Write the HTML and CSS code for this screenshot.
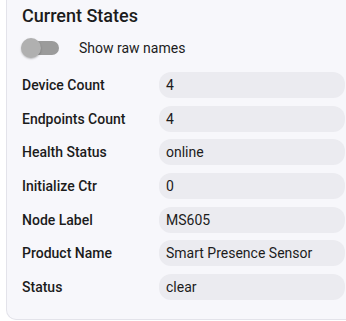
FILE: index.html
```html
<html>
<head>
  <link rel="stylesheet" href="styles.css">
</head>
<body>
<div class="card">
  <h2 class="title">Current States</h2>
  <div class="raw_toggle">
    <div class="switch">
      <div class="track"></div>
      <div class="thumb"></div>
    </div>
    <span>Show raw names</span>
  </div>
  <div class="states">
    <div class="label">Device Count</div>
    <div class="value">4</div>
    <div class="label">Endpoints Count</div>
    <div class="value">4</div>
    <div class="label">Health Status</div>
    <div class="value">online</div>
    <div class="label">Initialize Ctr</div>
    <div class="value">0</div>
    <div class="label">Node Label</div>
    <div class="value">MS605</div>
    <div class="label">Product Name</div>
    <div class="value">Smart Presence Sensor</div>
    <div class="label">Status</div>
    <div class="value">clear</div>
  </div>
</div>
</body>
</html>
```

FILE: styles.css
```css
body{
  margin: 0;
  background: #ffffff;
  font-family: Roboto, 'Noto Sans', sans-serif;
  color: #1c1c1c;
  overflow: hidden;
}
.card{
  margin-left: 6px;
  width: 340px;
  box-sizing: border-box;
  background: #f7f7fb;
  border-left: 1px solid #e3e3ea;
  border-bottom: 1px solid #e3e3ea;
  border-radius: 0 0 0 10px;
  padding: 4px 1px 19px 15px;
}
.title{
  margin: 0;
  font-size: 18px;
  line-height: 24px;
  font-weight: 500;
}
.raw_toggle{
  display: flex;
  align-items: center;
  gap: 20px;
  margin-top: 10px;
  height: 20px;
  font-size: 14px;
}
.switch{
  position: relative;
  width: 37px;
  height: 20px;
}
.track{
  position: absolute;
  left: 1px;
  top: 3px;
  width: 36px;
  height: 14px;
  border-radius: 7px;
  background: #9b9b9b;
}
.thumb{
  position: absolute;
  left: -1px;
  top: 0;
  width: 20px;
  height: 20px;
  border-radius: 50%;
  background: #b0b0b0;
  box-shadow: 0 1px 2px rgba(0,0,0,0.25);
}
.states{
  display: grid;
  grid-template-columns: 137px 1fr;
  row-gap: 7.7px;
  margin-top: 14px;
  font-size: 14px;
  align-items: center;
}
.label{
  font-weight: 500;
}
.value{
  height: 26px;
  line-height: 26px;
  padding-left: 7px;
  background: #ebebf0;
  border-radius: 12px;
}
```
